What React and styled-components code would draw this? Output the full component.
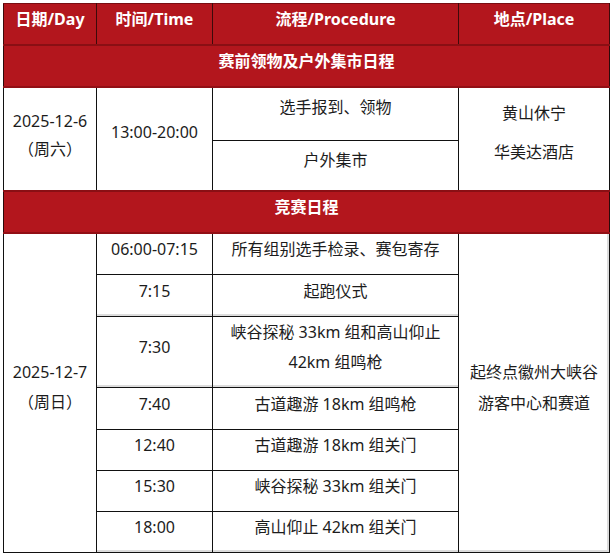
import React from "react";
import styled, { createGlobalStyle } from "styled-components";

const Global = createGlobalStyle`
  html, body { margin: 0; padding: 0; background: #fff; }
  body { font-family: "Noto Sans", "Noto Sans CJK SC", sans-serif; }
  td, th { box-sizing: border-box; }
`;

const Page = styled.div`
  padding: 3px 0 0 3px;
`;

const Table = styled.table`
  width: 606px;
  table-layout: fixed;
  border-collapse: collapse;
  border: 1px solid #111;
  font-size: 16px;
  color: #1c1c1c;
`;

const HeadCell = styled.th`
  height: ${(p) => p.$h}px;
  background: #b3161d;
  color: #fff;
  font-weight: 700;
  text-align: center;
  vertical-align: middle;
  padding: 0 4px 10px;
  border: 1px solid #3d0a0a;
  border-top-color: #7a0d12;
  line-height: 30px;
`;

const SectionCell = styled.td`
  height: ${(p) => p.$h}px;
  background: #b3161d;
  color: #fff;
  font-weight: 700;
  text-align: center;
  vertical-align: middle;
  padding: 0 4px 10px;
  border: 1px solid #2a0a0a;
  border-top: 2px solid #8a0f14;
  border-bottom: 2px solid #920f15;
  line-height: 30px;
`;

const Cell = styled.td`
  height: ${(p) => p.$h}px;
  text-align: center;
  vertical-align: middle;
  padding: 0 4px ${(p) => p.$pb ?? 10}px;
  border: 1px solid #111;
  line-height: ${(p) => p.$lh ?? 30}px;
  box-shadow: ${(p) =>
    p.$shade ? "inset 0 -2px 0 #dcdcdc" : p.$rshade ? "inset -2px -2px 0 #dcdcdc" : "none"};
`;

const Line = styled.div`
  white-space: nowrap;
`;

const Stack = styled.div`
  display: flex;
  flex-direction: column;
  gap: ${(p) => p.$gap ?? 0}px;
`;

const race = [
  { t: "06:00-07:15", p: ["所有组别选手检录、赛包寄存"], h: 41 },
  { t: "7:15", p: ["起跑仪式"], h: 42, shade: true },
  { t: "7:30", p: ["峡谷探秘 33km 组和高山仰止", "42km 组鸣枪"], h: 69, shade: true },
  { t: "7:40", p: ["古道趣游 18km 组鸣枪"], h: 42 },
  { t: "12:40", p: ["古道趣游 18km 组关门"], h: 41 },
  { t: "15:30", p: ["峡谷探秘 33km 组关门"], h: 41 },
  { t: "18:00", p: ["高山仰止 42km 组关门"], h: 41, shade: true },
];

export default function App() {
  return (
    <Page>
      <Global />
      <Table>
        <colgroup>
          <col style={{ width: 93 }} />
          <col style={{ width: 116 }} />
          <col style={{ width: 246 }} />
          <col style={{ width: 151 }} />
        </colgroup>
        <thead>
          <tr>
            <HeadCell $h={41}>日期/Day</HeadCell>
            <HeadCell $h={41}>时间/Time</HeadCell>
            <HeadCell $h={41}>流程/Procedure</HeadCell>
            <HeadCell $h={41}>地点/Place</HeadCell>
          </tr>
        </thead>
        <tbody>
          <tr>
            <SectionCell colSpan={4} $h={41}>
              赛前领物及户外集市日程
            </SectionCell>
          </tr>
          <tr>
            <Cell rowSpan={2} $lh={28} $pb={8}>
              <Stack>
                <Line>2025-12-6</Line>
                <Line>（周六）</Line>
              </Stack>
            </Cell>
            <Cell rowSpan={2} $pb={14}>
              13:00-20:00
            </Cell>
            <Cell $h={53} $pb={14}>
              选手报到、领物
            </Cell>
            <Cell rowSpan={2} $pb={14} $lh={28}>
              <Stack $gap={11}>
                <Line>黄山休宁</Line>
                <Line>华美达酒店</Line>
              </Stack>
            </Cell>
          </tr>
          <tr>
            <Cell $h={51}>户外集市</Cell>
          </tr>
          <tr>
            <SectionCell colSpan={4} $h={41}>
              竞赛日程
            </SectionCell>
          </tr>
          {race.map((r, i) => (
            <tr key={r.t}>
              {i === 0 && (
                <Cell rowSpan={race.length} $pb={12}>
                  <Stack>
                    <Line>2025-12-7</Line>
                    <Line>（周日）</Line>
                  </Stack>
                </Cell>
              )}
              <Cell $h={r.h} $shade={r.shade}>
                {r.t}
              </Cell>
              <Cell $h={r.h} $shade={r.shade}>
                <Stack>
                  {r.p.map((x) => (
                    <Line key={x}>{x}</Line>
                  ))}
                </Stack>
              </Cell>
              {i === 0 && (
                <Cell rowSpan={race.length} $pb={12} $rshade>
                  <Stack $gap={1}>
                    <Line>起终点徽州大峡谷</Line>
                    <Line>游客中心和赛道</Line>
                  </Stack>
                </Cell>
              )}
            </tr>
          ))}
        </tbody>
      </Table>
    </Page>
  );
}
